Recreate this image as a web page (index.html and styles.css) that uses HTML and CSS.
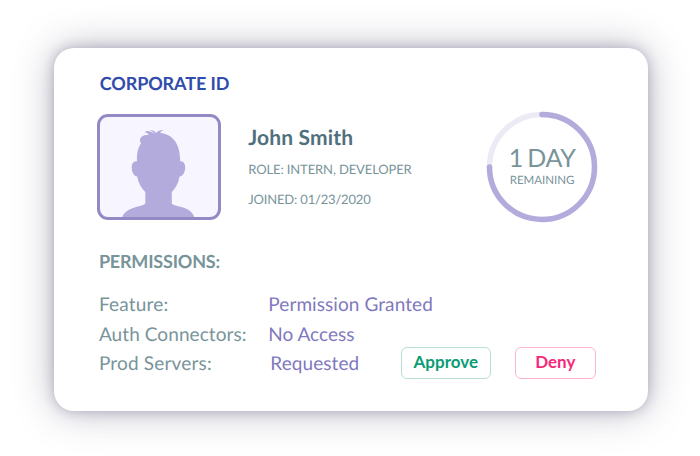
FILE: index.html
```
<!DOCTYPE html>
<html lang="en">
<head>
<meta charset="utf-8">
<title>Corporate ID</title>
<link rel="stylesheet" href="styles.css">
</head>
<body>
<main class="card">
  <h1 class="title">CORPORATE ID</h1>
  <section class="profile">
    <div class="photo">
      <svg width="118" height="100" viewBox="100 117 118 100" aria-hidden="true">
        <path class="person" d="M122 217.500C124 212.500 128 209.500 134.500 207.500C141 205.500 145.300 205 145.300 203L145.300 192C141.500 188.500 138.500 183.500 137.200 176.500C134 176.500 131.700 172 131.700 167.500C131.700 163.500 133.800 160.500 137 161.300C136.600 153 138 148 141 143.500C138.500 140 140.500 134.500 149 134.800C147.500 133 146.500 132.200 144.500 132.200C147 130 150.800 131.200 154 133.500C153.500 132 151.500 130.700 149.800 129.900C153 129.700 155 131.200 156.300 133C157.600 130.800 160 129.800 163.500 130.400C161.500 130.800 160.600 131.600 160.200 133C172.500 134 180.700 144 180.100 161.300C183 160.500 185.200 163.500 185.200 167.500C185.200 172 182.800 176.500 179.600 176.500C178.300 183.500 175.500 188.500 171.800 192L171.800 203C171.800 205 176 205.500 183 207.500C189.500 209.500 192.500 212.500 194.500 217.500Z"/>
      </svg>
    </div>
    <div class="identity">
      <h2 class="name">John Smith</h2>
      <p class="meta role">ROLE: INTERN, DEVELOPER</p>
      <p class="meta joined">JOINED: 01/23/2020</p>
    </div>
    <div class="timer">
      <svg class="ring" width="112" height="112" viewBox="0 0 112 112" aria-hidden="true">
        <circle class="track" cx="56" cy="56" r="52.500"/>
        <path class="progress" d="M56 3.500A52.500 52.500 0 1 1 3.500 56"/>
      </svg>
      <strong class="days">1 DAY</strong>
      <span class="remaining">REMAINING</span>
    </div>
  </section>
  <h2 class="subtitle">PERMISSIONS:</h2>
  <section class="permissions">
    <dl class="list">
      <dt class="l1">Feature:</dt><dd class="v1">Permission Granted</dd>
      <dt class="l2">Auth Connectors:</dt><dd class="v2">No Access</dd>
      <dt class="l3">Prod Servers:</dt><dd class="v3">Requested</dd>
    </dl>
    <div class="actions">
      <button class="btn approve">Approve</button>
      <button class="btn deny">Deny</button>
    </div>
  </section>
</main>
</body>
</html>
```
FILE: styles.css
```
* { box-sizing: border-box; margin: 0; padding: 0; }
body { width: 700px; height: 456px; padding: 47.500px 0 0 53.500px; overflow: hidden; background: #fff; font-family: Lato, sans-serif; color: #78949a; text-rendering: geometricPrecision; }
.card { width: 594.500px; height: 363.500px; padding: 23.500px 50px 0 43.900px; border-radius: 20px; background: #fff; box-shadow: 0 0 12px rgba(48, 42, 90, .26), 0 0 38px rgba(60, 55, 90, .36); }
.title { padding-left: 2.300px; font-size: 18px; line-height: 24px; font-weight: 700; letter-spacing: -.1px; color: #304cac; }
.profile { display: flex; height: 112px; margin-top: 16px; }
.photo { width: 124px; height: 106px; margin-top: 3px; border: 3px solid #9389c5; border-radius: 11px; background: #f7f5ff; overflow: hidden; }
.photo svg { display: block; }
.person { fill: #b3abdc; }
.identity { width: 239px; padding: 13px 0 0 27px; white-space: nowrap; }
.name { font-size: 21px; line-height: 28px; letter-spacing: .15px; color: #4f707c; }
.meta { font-size: 13px; line-height: 20px; letter-spacing: -.12px; }
.role { margin-top: 7px; }
.joined { margin-top: 10px; letter-spacing: -.18px; }
.timer { position: relative; width: 112px; margin-left: 26px; padding-top: 33px; display: flex; flex-direction: column; align-items: center; white-space: nowrap; }
.ring { position: absolute; inset: 0; }
.track, .progress { fill: none; stroke-width: 5.500; }
.track { stroke: #eceaf5; }
.progress { stroke: #b3abdc; stroke-linecap: round; }
.days { font-size: 25px; line-height: 28px; font-weight: 400; letter-spacing: -.4px; word-spacing: -1.500px; }
.remaining { margin-top: 2px; font-size: 11.500px; line-height: 14px; }
.subtitle { margin: 26px 0 0 1.500px; font-size: 18px; line-height: 24px; letter-spacing: -.2px; }
.permissions { display: flex; margin-top: 17px; }
.list { display: grid; grid-template-columns: 169.400px 180px; grid-auto-rows: 29.500px; padding-left: 1.500px; font-size: 19px; line-height: 29.500px; letter-spacing: .08px; white-space: nowrap; }
.l1, .l3 { letter-spacing: .18px; }
dd { color: #7f79be; }
.v2 { letter-spacing: 0; }
.v3 { padding-left: 2px; }
.actions { display: flex; gap: 24px; margin: 56.500px 0 0 -47.500px; }
.btn { height: 32px; border: 1px solid; border-radius: 6px; background: #fff; font: 700 17px/28px Lato, sans-serif; padding-bottom: 2px; }
.approve { width: 90px; border-color: #b7dfd3; color: #0b9c76; }
.deny { width: 81px; border-color: #ffb3d0; color: #f6287a; }
```
